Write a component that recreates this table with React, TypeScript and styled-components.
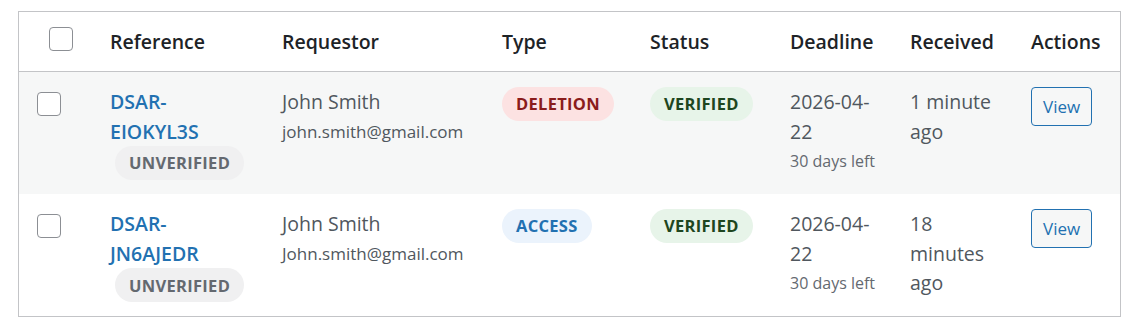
import React from 'react';
import styled, { createGlobalStyle, css } from 'styled-components';

const GlobalStyle = createGlobalStyle`
  body {
    margin: 0;
    background: #fff;
    font-family: "Open Sans", "Liberation Sans", sans-serif;
    color: #50575e;
  }
`;

const Wrap = styled.div`
  padding: 11px 6px 0 18px;
`;

const Table = styled.table`
  width: 1103px;
  table-layout: fixed;
  border-collapse: separate;
  border-spacing: 0;
  border: 1px solid #c3c4c7;
  background: #fff;
`;

const Col = styled.col<{ $w: number }>`
  width: ${p => p.$w}px;
`;

const Th = styled.th`
  height: 59px;
  padding: 0 15px;
  text-align: left;
  font-size: 19.5px;
  font-weight: 600;
  color: #1d2327;
  border-bottom: 1px solid #c3c4c7;
  vertical-align: middle;
  line-height: 29px;
  white-space: nowrap;
`;

const CheckTh = styled(Th)`
  padding: 0 0 0 30px;
  & > span { margin-top: -5px; }
`;

const Row = styled.tr<{ $striped?: boolean }>`
  background: ${p => (p.$striped ? '#f6f7f7' : '#fff')};
`;

const Td = styled.td`
  padding: 15px 15px 14px;
  vertical-align: top;
  font-size: 19.5px;
  line-height: 29.6px;
  color: #50575e;
`;

const CheckTd = styled.td`
  padding: 20px 0 0 18px;
  vertical-align: top;
`;

const Box = styled.span`
  display: block;
  width: 22px;
  height: 22px;
  border: 1px solid #8c8f94;
  border-radius: 4px;
  background: #fff;
`;

const Stack = styled.div`
  display: flex;
  flex-direction: column;
  align-items: flex-start;
  max-width: 135px;
`;

const RefLink = styled.a`
  color: #2271b1;
  font-weight: 600;
  text-decoration: none;
`;

const tones = {
  grey: css`background: #f0f0f1; color: #646970;`,
  red: css`background: #fce2e2; color: #8a1c1c;`,
  green: css`background: #e7f4e9; color: #1e4620;`,
  blue: css`background: #ebf3fc; color: #2271b1;`,
};

const Pill = styled.span<{ $tone: keyof typeof tones; $indent?: boolean }>`
  display: inline-flex;
  align-items: center;
  height: 34px;
  padding: 0 14px;
  border-radius: 17px;
  font-size: 16.5px;
  font-weight: 700;
  letter-spacing: 0.3px;
  text-transform: uppercase;
  white-space: nowrap;
  margin-left: ${p => (p.$indent ? '5px' : '0')};
  ${p => tones[p.$tone]};
`;

const Email = styled.div`
  font-size: 17px;
  line-height: 29px;
`;

const Hint = styled.div`
  font-size: 16px;
  line-height: 30px;
  color: #646970;
`;

const ViewButton = styled.button`
  height: 39px;
  padding: 0 11px;
  border: 1px solid #2271b1;
  border-radius: 4px;
  background: #f6f7f7;
  color: #2271b1;
  font-family: inherit;
  font-size: 17px;
  cursor: pointer;
`;

type Req = {
  ref: string;
  name: string;
  email: string;
  type: string;
  tone: 'red' | 'blue';
  deadline: string;
  left: string;
  received: string;
};

const rows: Req[] = [
  {
    ref: 'DSAR-EIOKYL3S',
    name: 'John Smith',
    email: 'john.smith@gmail.com',
    type: 'Deletion',
    tone: 'red',
    deadline: '2026-04-22',
    left: '30 days left',
    received: '1 minute ago',
  },
  {
    ref: 'DSAR-JN6AJEDR',
    name: 'John Smith',
    email: 'John.smith@gmail.com',
    type: 'Access',
    tone: 'blue',
    deadline: '2026-04-22',
    left: '30 days left',
    received: '18 minutes ago',
  },
];

const cols: [string, number][] = [
  ['Reference', 172],
  ['Requestor', 220],
  ['Type', 148],
  ['Status', 140],
  ['Deadline', 120],
  ['Received', 121],
  ['Actions', 104],
];

export default function App() {
  return (
    <Wrap>
      <GlobalStyle />
      <Table>
        <colgroup>
          <Col $w={76} />
          {cols.map(([label, w]) => <Col key={label} $w={w} />)}
        </colgroup>
        <thead>
          <tr>
            <CheckTh><Box /></CheckTh>
            {cols.map(([label]) => <Th key={label}>{label}</Th>)}
          </tr>
        </thead>
        <tbody>
          {rows.map((r, i) => (
            <Row key={r.ref} $striped={i % 2 === 0}>
              <CheckTd><Box /></CheckTd>
              <Td>
                <Stack>
                  <RefLink href="#">{r.ref}</RefLink>
                  <Pill $tone="grey" $indent>Unverified</Pill>
                </Stack>
              </Td>
              <Td>
                <div>{r.name}</div>
                <Email>{r.email}</Email>
              </Td>
              <Td><Pill $tone={r.tone}>{r.type}</Pill></Td>
              <Td><Pill $tone="green">Verified</Pill></Td>
              <Td>
                <div>{r.deadline}</div>
                <Hint>{r.left}</Hint>
              </Td>
              <Td>{r.received}</Td>
              <Td><ViewButton>View</ViewButton></Td>
            </Row>
          ))}
        </tbody>
      </Table>
    </Wrap>
  );
}
